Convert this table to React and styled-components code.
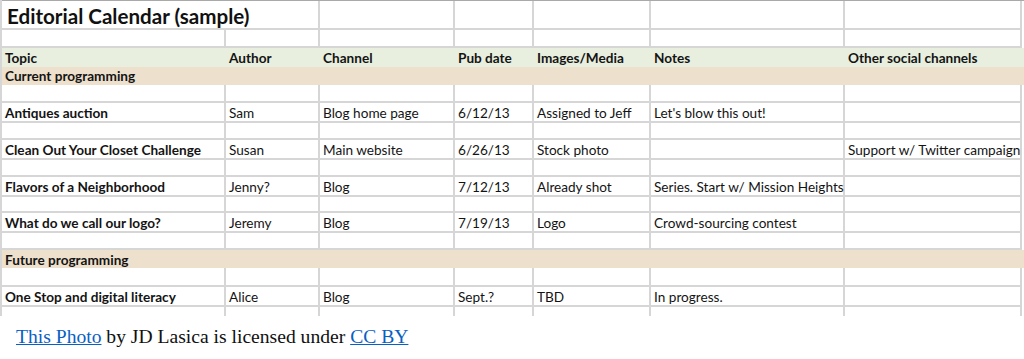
import React from "react";
import styled, { createGlobalStyle } from "styled-components";

const GlobalStyle = createGlobalStyle`
  body {
    margin: 0;
    background: #ffffff;
  }
`;

const COLS = "224px 94px 135px 79px 117px 194px 177px";
const LINE = "#d6d6d6";

const fills = {
  green: "#e9efdf",
  tan: "#ede0cc",
};

const rows = [
  { kind: "blank" },
  {
    fill: "green",
    bold: true,
    cells: ["Topic", "Author", "Channel", "Pub date", "Images/Media", "Notes", "Other social channels"],
  },
  { fill: "tan", bold: true, label: "Current programming" },
  { kind: "blank" },
  { cells: ["Antiques auction", "Sam", "Blog home page", "6/12/13", "Assigned to Jeff", "Let's blow this out!", ""] },
  { kind: "blank" },
  { cells: ["Clean Out Your Closet Challenge", "Susan", "Main website", "6/26/13", "Stock photo", "", "Support w/ Twitter campaign"] },
  { kind: "blank" },
  { cells: ["Flavors of a Neighborhood", "Jenny?", "Blog", "7/12/13", "Already shot", "Series. Start w/ Mission Heights", ""] },
  { kind: "blank" },
  { cells: ["What do we call our logo?", "Jeremy", "Blog", "7/19/13", "Logo", "Crowd-sourcing contest", ""] },
  { kind: "blank" },
  { fill: "tan", bold: true, label: "Future programming" },
  { kind: "blank" },
  { cells: ["One Stop and digital literacy", "Alice", "Blog", "Sept.?", "TBD", "In progress.", ""] },
];

function App() {
  return (
    <>
      <GlobalStyle />
      <Photo>
        <Sheet>
          <TitleRow>
            <TitleCell>Editorial Calendar (sample)</TitleCell>
            {[0, 1, 2, 3, 4].map((i) => (
              <Cell key={i} />
            ))}
          </TitleRow>
          {rows.map((row, r) => {
            if (row.label) {
              return (
                <Row key={r} $fill={row.fill}>
                  <BandLabel>{row.label}</BandLabel>
                </Row>
              );
            }
            const cells = row.cells || ["", "", "", "", "", "", ""];
            return (
              <Row key={r} $fill={row.fill}>
                {cells.map((text, c) => (
                  <Cell key={c} $bold={row.bold || c === 0} $fill={row.fill}>
                    {text}
                  </Cell>
                ))}
              </Row>
            );
          })}
          <Row $short>
            {[0, 1, 2, 3, 4, 5, 6].map((i) => (
              <Cell key={i} />
            ))}
          </Row>
        </Sheet>
      </Photo>
      <Caption>
        <a href="#photo">This Photo</a> by JD Lasica is licensed under{" "}
        <a href="#license">CC BY</a>
      </Caption>
    </>
  );
}

const Photo = styled.div`
  width: 1024px;
  height: 316px;
  overflow: hidden;
  background: #ffffff;
`;

const Sheet = styled.div`
  display: flex;
  flex-direction: column;
  border-left: 2px solid ${LINE};
  font-family: Lato, "Open Sans", sans-serif;
  color: #141414;
`;

const TitleRow = styled.div`
  display: grid;
  grid-template-columns: 318px 135px 79px 117px 194px 177px;
  height: 30px;
  border-top: 1px solid #a9a9a9;
  box-sizing: border-box;
`;

const Row = styled.div`
  display: grid;
  grid-template-columns: ${COLS};
  height: ${(p) => (p.$short ? "14px" : "18.33px")};
  flex-shrink: 0;
  background: ${(p) => (p.$fill ? fills[p.$fill] : "transparent")};
`;

const Cell = styled.div`
  box-sizing: border-box;
  border-right: 2px solid ${(p) => (p.$fill ? fills[p.$fill] : LINE)};
  border-bottom: 2px solid ${(p) => (p.$fill ? fills[p.$fill] : LINE)};
  padding: 2px 0 0 3px;
  display: flex;
  align-items: center;
  font-size: 13.6px;
  font-weight: ${(p) => (p.$bold ? 700 : 400)};
  white-space: nowrap;
  overflow: visible;
  min-width: 0;
`;

const TitleCell = styled(Cell)`
  padding: 2px 0 0 5px;
  font-size: 20.6px;
  font-weight: 700;
  color: #111111;
`;

const BandLabel = styled.div`
  grid-column: 1 / -1;
  display: flex;
  align-items: center;
  padding: 1px 0 0 3px;
  font-size: 13.6px;
  font-weight: 700;
  white-space: nowrap;
`;

const Caption = styled.p`
  margin: 10px 0 0;
  padding-left: 16px;
  font-family: "Liberation Serif", "Times New Roman", serif;
  font-size: 19.6px;
  line-height: 22px;
  color: #111111;

  a {
    color: #0a5fc4;
    text-decoration: underline;
  }
`;

export default App;
